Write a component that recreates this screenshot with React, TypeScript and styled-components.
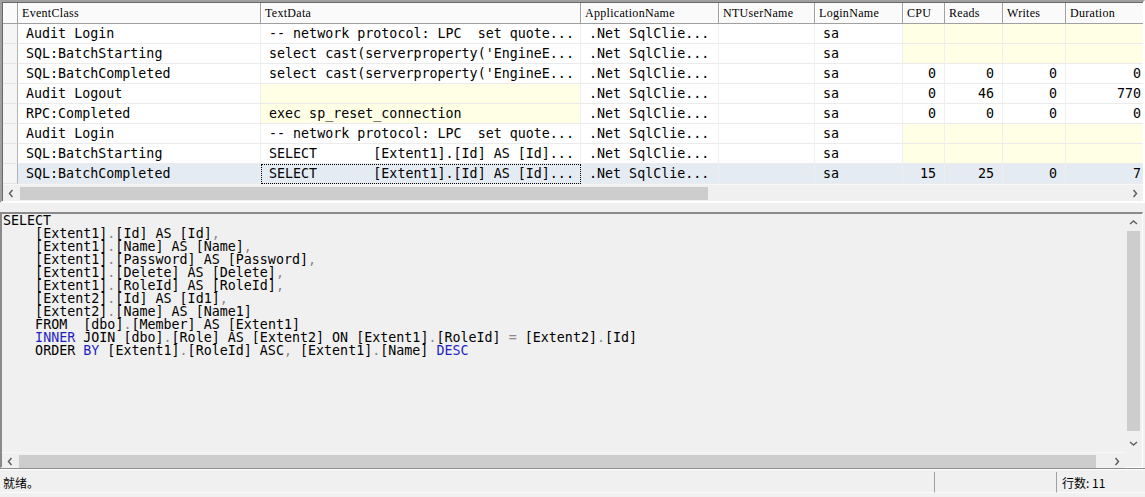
import React from 'react';
import styled, { createGlobalStyle, css } from 'styled-components';

const GlobalStyle = createGlobalStyle`
  html, body {
    margin: 0;
    padding: 0;
    background: #f0f0f0;
  }
  body {
    width: 1145px;
    height: 497px;
    overflow: hidden;
  }
`;

const COLUMNS = '15px 243px 320px 138px 96px 88px 42px 58px 63px 84px';
const MONO = `'DejaVu Sans Mono', 'Liberation Mono', monospace`;

const Window = styled.div`
  width: 1145px;
  height: 497px;
  display: flex;
  flex-direction: column;
  background: #f0f0f0;
  overflow: hidden;
`;

/* ---------- top trace grid ---------- */

const GridFrame = styled.div`
  height: 203px;
  box-sizing: border-box;
  border-top: 2px solid #a0a0a0;
  border-left: 2px solid #a0a0a0;
  border-right: 2px solid #ffffff;
  border-bottom: 2px solid #ffffff;
  display: flex;
`;

const GridInner = styled.div`
  flex: 1;
  min-width: 0;
  border-top: 1px solid #696969;
  border-left: 1px solid #696969;
  display: flex;
  flex-direction: column;
  overflow: hidden;
  background: #ffffff;
`;

const HeaderRow = styled.div`
  display: grid;
  grid-template-columns: ${COLUMNS};
  height: 21px;
  box-sizing: border-box;
  border-bottom: 1px solid #a0a0a0;
  background: #fafafa;
`;

const HeaderCell = styled.div`
  box-sizing: border-box;
  border-right: 1px solid #a0a0a0;
  box-shadow: inset 1px 0 0 #ffffff;
  padding-left: 4px;
  display: flex;
  align-items: center;
  font-family: 'Liberation Serif', 'Times New Roman', serif;
  font-size: 12px;
  letter-spacing: 0.3px;
  color: #000;
  white-space: nowrap;
  overflow: hidden;
`;

const DataRow = styled.div<{ $selected?: boolean }>`
  display: grid;
  grid-template-columns: ${COLUMNS};
  height: 20px;
  background: ${({ $selected }) => ($selected ? '#e5ebf3' : '#ffffff')};
`;

const RowHead = styled.div`
  box-sizing: border-box;
  background: #f5f5f5;
  border-right: 1px solid #b4b4b4;
  border-bottom: 1px solid #e4e4e4;
`;

const Cell = styled.div<{ $align?: 'left' | 'right'; $yellow?: boolean; $focus?: boolean }>`
  box-sizing: border-box;
  height: 20px;
  border-right: 1px solid #efefef;
  border-bottom: 1px solid #ebebeb;
  display: flex;
  align-items: center;
  justify-content: ${({ $align }) => ($align === 'right' ? 'flex-end' : 'flex-start')};
  padding: ${({ $align }) => ($align === 'right' ? '0 8px 0 0' : '0 0 0 8px')};
  font-family: ${MONO};
  font-size: 13.33px;
  color: #000;
  white-space: pre;
  overflow: hidden;
  ${({ $yellow }) =>
    $yellow &&
    css`
      background: #ffffe6;
    `}
  ${({ $focus }) =>
    $focus &&
    css`
      outline: 1px dotted #000;
      outline-offset: -1px;
    `}
`;

/* ---------- scrollbars ---------- */

const HScroll = styled.div`
  height: 17px;
  flex: none;
  display: flex;
  align-items: center;
  background: #f0f0f0;
  border-top: 1px solid #f7f7f7;
  box-sizing: border-box;
`;

const VScroll = styled.div`
  width: 17px;
  display: flex;
  flex-direction: column;
  align-items: center;
  background: #f0f0f0;
`;

const ArrowBox = styled.div<{ $vertical?: boolean }>`
  flex: none;
  width: 17px;
  height: ${({ $vertical }) => ($vertical ? '17px' : '15px')};
  display: flex;
  align-items: center;
  justify-content: center;
`;

const Thumb = styled.div<{ $length: number; $vertical?: boolean }>`
  flex: none;
  background: #cdcdcd;
  ${({ $vertical, $length }) =>
    $vertical
      ? css`
          width: 13px;
          height: ${$length}px;
        `
      : css`
          height: 13px;
          width: ${$length}px;
        `}
`;

const Spacer = styled.div`
  flex: 1;
`;

const Chevron: React.FC<{ dir: 'left' | 'right' | 'up' | 'down' }> = ({ dir }) => {
  const d = {
    left: 'M5.5 1 L2.5 4.5 L5.5 8',
    right: 'M3.5 1 L6.5 4.5 L3.5 8',
    up: 'M1 6 L4.5 3 L8 6',
    down: 'M1 3 L4.5 6 L8 3',
  }[dir];
  return (
    <svg width="9" height="9" viewBox="0 0 9 9">
      <path d={d} fill="none" stroke="#606060" strokeWidth="1.5" />
    </svg>
  );
};

/* ---------- SQL text pane ---------- */

const Splitter = styled.div`
  height: 9px;
  flex: none;
`;

const TextFrame = styled.div`
  height: 256px;
  width: 1143px;
  box-sizing: border-box;
  border-top: 2px solid #8a8a8a;
  border-left: 2px solid #8a8a8a;
  border-right: 1px solid #ffffff;
  border-bottom: 1px solid #ffffff;
  display: grid;
  grid-template-columns: 1fr 17px;
  grid-template-rows: 1fr 15px;
`;

const Code = styled.pre`
  margin: 0;
  padding: 0 0 0 1px;
  font-family: ${MONO};
  font-size: 13.33px;
  line-height: 13px;
  color: #000;
  overflow: hidden;
`;

const Token = styled.span<{ $kind: 'kw' | 'punct' | 'plain' }>`
  color: ${({ $kind }) => ($kind === 'kw' ? '#1f1fc4' : $kind === 'punct' ? '#8a8a8a' : '#000')};
`;

const Corner = styled.div`
  background: #f0f0f0;
`;

/* ---------- status bar ---------- */

const StatusBar = styled.div`
  flex: 1;
  display: flex;
  border-top: 1px solid #8c8c8c;
  box-shadow: inset 0 1px 0 #ffffff;
  padding: 3px 0 4px;
  font-family: 'Noto Sans CJK SC', 'Liberation Sans', sans-serif;
  font-size: 12px;
  color: #000;
`;

const StatusPanel = styled.div<{ $width?: number; $divider?: boolean }>`
  ${({ $width }) => ($width ? `width: ${$width}px; flex: none;` : 'flex: 1;')}
  box-sizing: border-box;
  display: flex;
  align-items: center;
  padding-left: ${({ $divider }) => ($divider ? '5px' : '3px')};
  border-left: ${({ $divider }) => ($divider ? '1px solid #a0a0a0' : 'none')};
  border-bottom: 1px solid #fbfbfb;
  white-space: nowrap;
`;

/* ---------- data ---------- */

type TraceRow = {
  event: string;
  text: string;
  textYellow?: boolean;
  nums?: [string, string, string, string];
  selected?: boolean;
};

const rows: TraceRow[] = [
  { event: 'Audit Login', text: '-- network protocol: LPC  set quote...' },
  { event: 'SQL:BatchStarting', text: "select cast(serverproperty('EngineE..." },
  { event: 'SQL:BatchCompleted', text: "select cast(serverproperty('EngineE...", nums: ['0', '0', '0', '0'] },
  { event: 'Audit Logout', text: '', textYellow: true, nums: ['0', '46', '0', '770'] },
  { event: 'RPC:Completed', text: 'exec sp_reset_connection', textYellow: true, nums: ['0', '0', '0', '0'] },
  { event: 'Audit Login', text: '-- network protocol: LPC  set quote...' },
  { event: 'SQL:BatchStarting', text: 'SELECT       [Extent1].[Id] AS [Id]...' },
  {
    event: 'SQL:BatchCompleted',
    text: 'SELECT       [Extent1].[Id] AS [Id]...',
    nums: ['15', '25', '0', '7'],
    selected: true,
  },
];

const headers = ['EventClass', 'TextData', 'ApplicationName', 'NTUserName', 'LoginName', 'CPU', 'Reads', 'Writes', 'Duration'];

const sqlLines = [
  'SELECT',
  '    [Extent1].[Id] AS [Id],',
  '    [Extent1].[Name] AS [Name],',
  '    [Extent1].[Password] AS [Password],',
  '    [Extent1].[Delete] AS [Delete],',
  '    [Extent1].[RoleId] AS [RoleId],',
  '    [Extent2].[Id] AS [Id1],',
  '    [Extent2].[Name] AS [Name1]',
  '    FROM  [dbo].[Member] AS [Extent1]',
  '    INNER JOIN [dbo].[Role] AS [Extent2] ON [Extent1].[RoleId] = [Extent2].[Id]',
  '    ORDER BY [Extent1].[RoleId] ASC, [Extent1].[Name] DESC',
];

const BLUE_WORDS = new Set(['INNER', 'BY', 'DESC']);

const renderLine = (line: string) =>
  line.split(/(\s+|[.,=])/).filter(Boolean).map((part, i) => {
    const kind = BLUE_WORDS.has(part) ? 'kw' : /^[.,=]$/.test(part) ? 'punct' : 'plain';
    return (
      <Token key={i} $kind={kind}>
        {part}
      </Token>
    );
  });

const App: React.FC = () => {
  return (
    <Window>
      <GlobalStyle />
      <GridFrame>
        <GridInner>
          <HeaderRow>
            <HeaderCell />
            {headers.map((h) => (
              <HeaderCell key={h}>{h}</HeaderCell>
            ))}
          </HeaderRow>
          {rows.map((r, i) => (
            <DataRow key={i} $selected={r.selected}>
              <RowHead />
              <Cell>{r.event}</Cell>
              <Cell $yellow={r.textYellow} $focus={r.selected}>
                {r.text}
              </Cell>
              <Cell>.Net SqlClie...</Cell>
              <Cell />
              <Cell>sa</Cell>
              {r.nums
                ? r.nums.map((n, j) => (
                    <Cell key={j} $align="right">
                      {n}
                    </Cell>
                  ))
                : [0, 1, 2, 3].map((j) => <Cell key={j} $yellow />)}
            </DataRow>
          ))}
          <Spacer />
          <HScroll>
            <ArrowBox>
              <Chevron dir="left" />
            </ArrowBox>
            <Thumb $length={688} />
            <Spacer />
            <ArrowBox>
              <Chevron dir="right" />
            </ArrowBox>
          </HScroll>
        </GridInner>
      </GridFrame>

      <Splitter />

      <TextFrame>
        <Code>
          {sqlLines.map((l, i) => (
            <div key={i}>{renderLine(l)}</div>
          ))}
        </Code>
        <VScroll>
          <ArrowBox $vertical>
            <Chevron dir="up" />
          </ArrowBox>
          <Thumb $vertical $length={200} />
          <Spacer />
          <ArrowBox $vertical>
            <Chevron dir="down" />
          </ArrowBox>
        </VScroll>
        <HScroll>
          <ArrowBox>
            <Chevron dir="left" />
          </ArrowBox>
          <Thumb $length={1077} />
          <Spacer />
          <ArrowBox>
            <Chevron dir="right" />
          </ArrowBox>
        </HScroll>
        <Corner />
      </TextFrame>

      <StatusBar>
        <StatusPanel>就绪。</StatusPanel>
        <StatusPanel $width={122} $divider />
        <StatusPanel $width={60} $divider>
          行数: 11
        </StatusPanel>
        <StatusPanel $width={29} />
      </StatusBar>
    </Window>
  );
};

export default App;
